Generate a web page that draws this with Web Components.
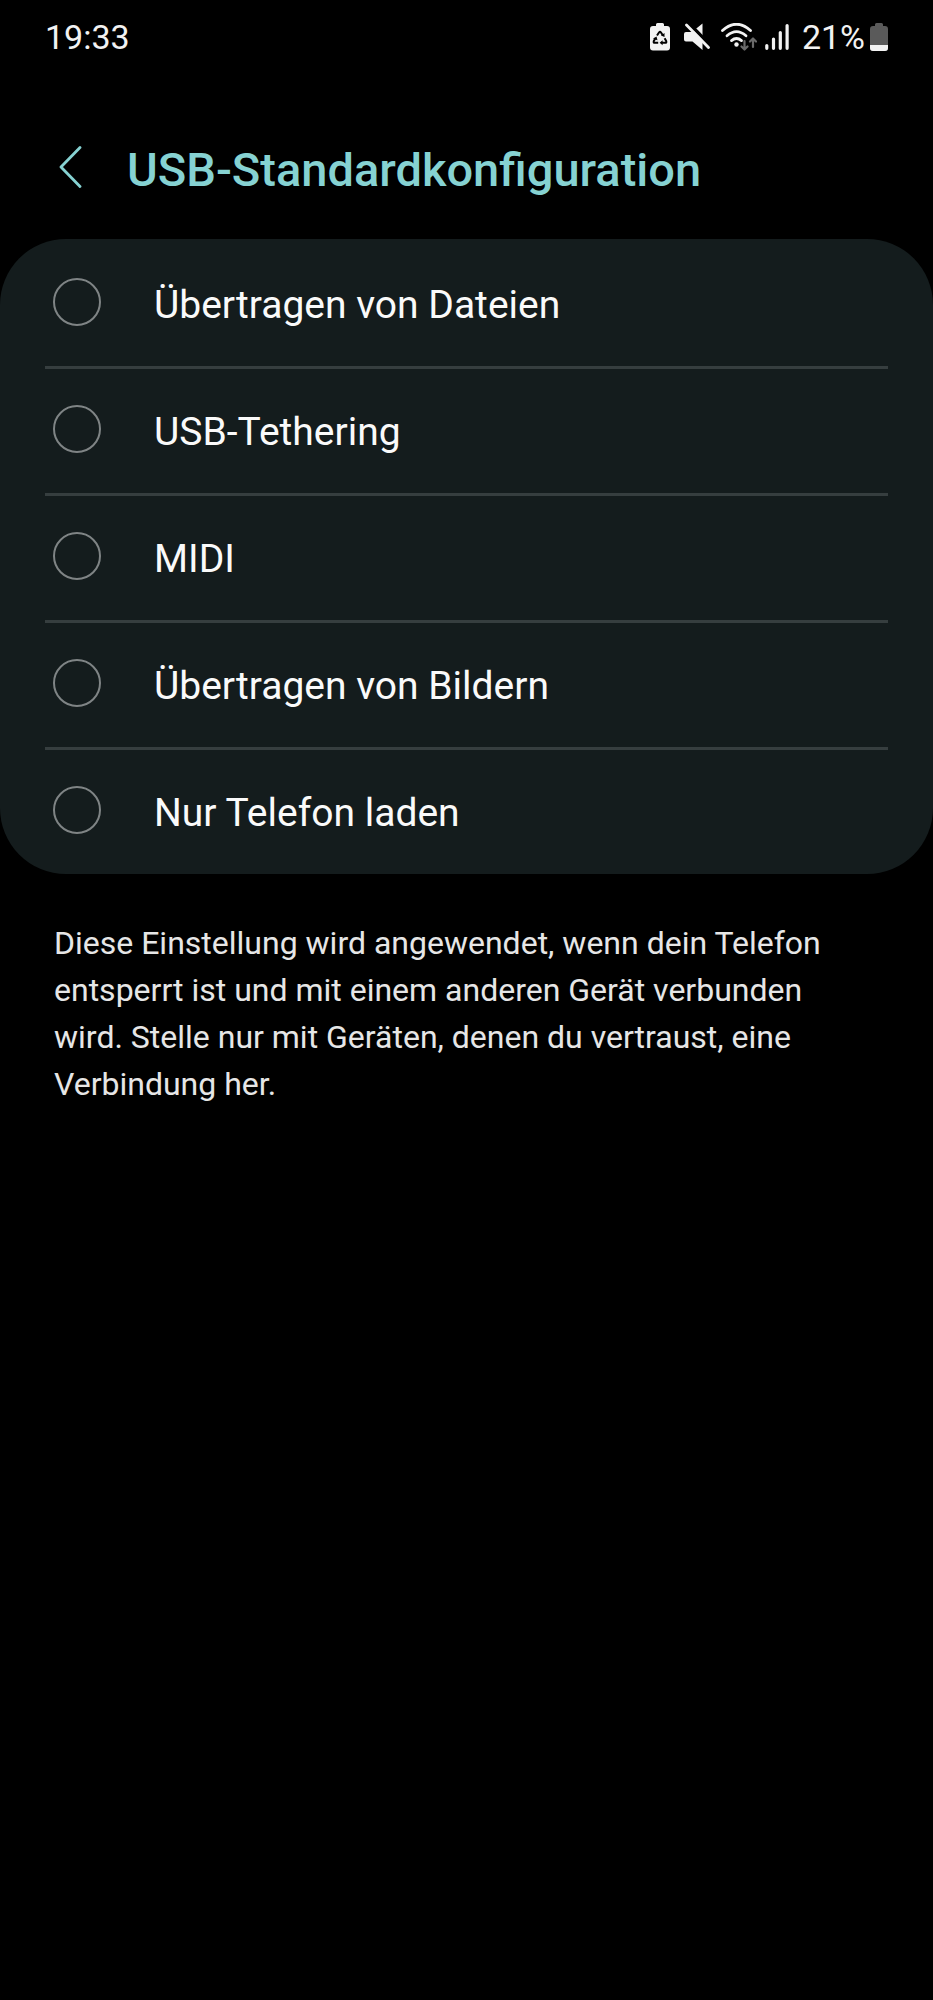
<!DOCTYPE html>
<html lang="de">
<head>
<meta charset="utf-8">
<meta name="viewport" content="width=device-width, initial-scale=1">
<title>USB-Standardkonfiguration</title>
<style>
  body {
    margin: 0;
    min-height: 100vh;
    background: #000000;
    color: #fafafa;
    font-family: Roboto, "Liberation Sans", sans-serif;
  }
</style>
</head>
<body>
<status-bar time="19:33" battery="21"></status-bar>
<main>
  <page-header>USB-Standardkonfiguration</page-header>
  <option-group label="USB-Standardkonfiguration">
    <radio-option value="files">Übertragen von Dateien</radio-option>
    <radio-option value="tethering">USB-Tethering</radio-option>
    <radio-option value="midi">MIDI</radio-option>
    <radio-option value="images">Übertragen von Bildern</radio-option>
    <radio-option value="charge">Nur Telefon laden</radio-option>
  </option-group>
  <help-text>Diese Einstellung wird angewendet, wenn dein Telefon entsperrt ist und mit einem anderen Gerät verbunden wird. Stelle nur mit Geräten, denen du vertraust, eine Verbindung her.</help-text>
</main>

<script>
class StatusBar extends HTMLElement {
  constructor() {
    super();
    this.attachShadow({ mode: "open" });
  }

  connectedCallback() {
    const time = this.getAttribute("time");
    const battery = Number(this.getAttribute("battery"));
    // inside of the battery is 28 units high
    const level = Math.round((28 * battery) / 100);

    this.shadowRoot.innerHTML = `
      <style>
        :host {
          display: flex;
          align-items: center;
          justify-content: space-between;
          height: 74px;
          padding: 0 45px;
          font-size: 34px;
          line-height: 40px;
          color: #f2f2f2;
        }

        .icons {
          display: flex;
          align-items: center;
        }

        svg {
          display: block;
          fill: none;
        }

        .saver { margin-right: 14px; }
        .mute { margin-right: 11px; }
        .wifi { margin-right: 8px; }
        .signal { margin-right: 13px; }
        .percent { margin-right: 5px; }
      </style>
      <time>${time}</time>
      <div class="icons">
        <svg class="saver" width="20" height="28" viewBox="0 0 20 28" aria-hidden="true">
          <path d="M6 1.500Q6 0 7.500 0h5Q14 0 14 1.500V3h3Q20 3 20 6v18.500q0 3-3 3H3q-3 0-3-3V6q0-3 3-3h3z" fill="#f2f2f2"/>
          <g stroke="#000" stroke-width="2" stroke-linejoin="round">
            <path d="M7 12.500 9 9.500q1-1.300 2 0l1.900 3"/>
            <path d="M14.600 15.300l1.600 2.800q.6 1.700-1 1.700H11.500"/>
            <path d="M8.200 19.800H4.800q-1.600 0-1-1.700l1.800-3"/>
          </g>
          <path d="M14.500 10v4l-3.500-1.600zM12.600 17.200v5l-3-2.500zM3 15.800l3.500-2.200 1 3.700z" fill="#000"/>
        </svg>
        <svg class="mute" width="26" height="28" viewBox="0 0 26 28" aria-hidden="true">
          <path d="M2 9h6L18.500.500V27L8.500 18.500H2q-2 0-2-2V11q0-2 2-2z" fill="#f2f2f2"/>
          <path d="M3 -1.500 26 22" stroke="#000" stroke-width="3.600"/>
          <path d="M2.500 2 24.500 24.500" stroke="#f2f2f2" stroke-width="2.800" stroke-linecap="round"/>
        </svg>
        <svg class="wifi" width="36" height="28" viewBox="0 0 36 28" aria-hidden="true">
          <g stroke="#f2f2f2" stroke-width="2.800" stroke-linecap="round">
            <path d="M1.500 7.500Q15.500-5 29.500 7.500"/>
            <path d="M6 12.800Q15.500 4.500 25 12.800"/>
            <path d="M10.500 17.600Q15.500 13.500 20.500 17.600"/>
          </g>
          <circle cx="15.500" cy="21.500" r="2.200" fill="#f2f2f2"/>
          <g stroke="#6a6a6a" stroke-width="2.200" stroke-linecap="round" stroke-linejoin="round">
            <path d="M23.500 18v8M20.500 23.500l3 3 3-3"/>
            <path d="M32 24v-8M29 18.500l3-3 3 3"/>
          </g>
        </svg>
        <svg class="signal" width="24" height="28" viewBox="0 0 24 28" aria-hidden="true">
          <path d="M1.800 22.500v2.800M8.500 16v9.300M15.300 9.500v15.800M22.100 2.500v22.800" stroke="#f2f2f2" stroke-width="3.200" stroke-linecap="round"/>
        </svg>
        <span class="percent">${battery}%</span>
        <svg width="18" height="28" viewBox="0 0 18 28" aria-hidden="true">
          <clipPath id="shape">
            <path d="M5 1.500Q5 0 6.500 0h5Q13 0 13 1.500V3h2q3 0 3 3v19q0 3-3 3H3q-3 0-3-3V6q0-3 3-3h2z"/>
          </clipPath>
          <g clip-path="url(#shape)">
            <rect width="18" height="28" fill="#5a5a5a"/>
            <rect y="${28 - level}" width="18" height="${level}" fill="#f2f2f2"/>
          </g>
        </svg>
      </div>
    `;
  }
}

class PageHeader extends HTMLElement {
  constructor() {
    super();
    this.attachShadow({ mode: "open" });
    this.shadowRoot.innerHTML = `
      <style>
        :host {
          display: flex;
          align-items: center;
          box-sizing: border-box;
          height: 165px;
          padding: 26px 45px 0;
          color: #86d2d2;
        }

        button {
          display: flex;
          align-items: center;
          width: 52px;
          height: 56px;
          margin-right: 30px;
          padding: 0 0 5px 14px;
          border: 0;
          background: none;
          color: inherit;
          cursor: pointer;
        }

        h1 {
          margin: 0;
          font-size: 47px;
          font-weight: 500;
          line-height: 56px;
        }
      </style>
      <button type="button" aria-label="Zurück">
        <svg width="24" height="42" viewBox="0 0 24 42" fill="none" stroke="currentColor" stroke-width="2.800" stroke-linecap="round" stroke-linejoin="round" aria-hidden="true">
          <path d="M21 1.500 2 21 21 40.500"/>
        </svg>
      </button>
      <h1><slot></slot></h1>
    `;
  }

  connectedCallback() {
    this.shadowRoot.querySelector("button").addEventListener("click", () => {
      history.back();
    });
  }
}

class OptionGroup extends HTMLElement {
  constructor() {
    super();
    this.attachShadow({ mode: "open" });
    this.shadowRoot.innerHTML = `
      <style>
        :host {
          display: block;
          padding: 0 45px;
          border-radius: 66px;
          background-color: #141c1d;
        }

        ::slotted(:not(:first-child)) {
          box-shadow: inset 0 3px #363e3f;
        }
      </style>
      <slot></slot>
    `;
  }

  connectedCallback() {
    this.setAttribute("role", "radiogroup");
    this.setAttribute("aria-label", this.getAttribute("label"));

    // Radios live in separate shadow roots, so the group clears the others
    this.addEventListener("option-selected", (e) => {
      this.querySelectorAll("radio-option").forEach((option) => {
        option.checked = option === e.target;
      });
    });
  }
}

class RadioOption extends HTMLElement {
  constructor() {
    super();
    this.attachShadow({ mode: "open" });
    this.shadowRoot.innerHTML = `
      <style>
        :host {
          display: block;
        }

        label {
          display: flex;
          align-items: center;
          min-height: 127px;
          padding-left: 8px;
          cursor: pointer;
        }

        input {
          appearance: none;
          flex: none;
          box-sizing: border-box;
          width: 48px;
          height: 48px;
          margin: 0 53px 1px 0;
          border: 2px solid #7f8485;
          border-radius: 50%;
          cursor: pointer;
        }

        input:checked {
          border-color: #86d2d2;
          background: radial-gradient(#86d2d2 40%, transparent 44%);
        }

        span {
          padding-top: 4px;
          font-size: 39px;
          line-height: 48px;
        }
      </style>
      <label for="radio">
        <input type="radio" id="radio">
        <span><slot></slot></span>
      </label>
    `;
    this.input = this.shadowRoot.querySelector("input");
  }

  connectedCallback() {
    this.input.value = this.getAttribute("value");
    this.input.addEventListener("change", () => {
      this.dispatchEvent(new CustomEvent("option-selected", { bubbles: true }));
    });
  }

  set checked(value) {
    this.input.checked = value;
  }
}

class HelpText extends HTMLElement {
  constructor() {
    super();
    this.attachShadow({ mode: "open" });
    this.shadowRoot.innerHTML = `
      <style>
        :host {
          display: block;
          padding: 46px 80px 46px 54px;
          color: #e6e6e6;
        }

        p {
          margin: 0;
          font-size: 32px;
          line-height: 47px;
        }
      </style>
      <p><slot></slot></p>
    `;
  }
}

customElements.define("status-bar", StatusBar);
customElements.define("page-header", PageHeader);
customElements.define("option-group", OptionGroup);
customElements.define("radio-option", RadioOption);
customElements.define("help-text", HelpText);
</script>
</body>
</html>
